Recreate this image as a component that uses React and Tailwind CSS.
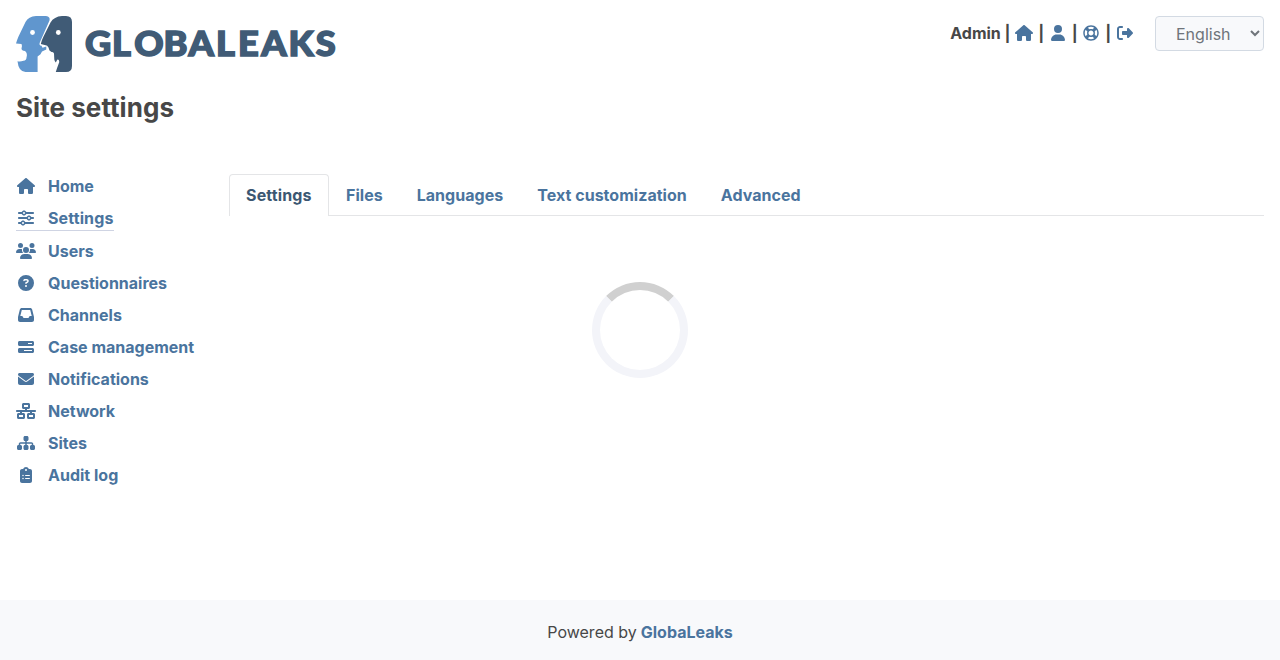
import React from 'react';
import {
  FaHouse, FaSliders, FaUsers, FaCircleQuestion, FaInbox, FaBarsProgress, FaEnvelope,
  FaNetworkWired, FaSitemap, FaClipboardList, FaUser, FaRightFromBracket,
} from 'react-icons/fa6';
import { FaRegLifeRing } from 'react-icons/fa';

const menu = [
  ['Home', FaHouse, 'w-[18px]'],
  ['Settings', FaSliders, 'w-4'],
  ['Users', FaUsers, 'w-5'],
  ['Questionnaires', FaCircleQuestion, 'w-4'],
  ['Channels', FaInbox, 'w-4'],
  ['Case management', FaBarsProgress, 'w-4'],
  ['Notifications', FaEnvelope, 'w-4'],
  ['Network', FaNetworkWired, 'w-5'],
  ['Sites', FaSitemap, 'w-[18px]'],
  ['Audit log', FaClipboardList, 'w-3'],
];

const actions = [
  [FaHouse, 'w-[18px]'],
  [FaUser, 'w-3.5'],
  [FaRegLifeRing, 'w-4'],
  [FaRightFromBracket, 'w-4'],
];

const tabs = ['Files', 'Languages', 'Text customization', 'Advanced'];

function Icon({ as: Glyph, width }) {
  return (
    <span className="inline-flex w-5 shrink-0 justify-center text-[#4a749e]">
      <Glyph className={`h-4 ${width}`} />
    </span>
  );
}

function Logo() {
  return (
    <svg className="block" width="324" height="56" viewBox="0 0 324 56" role="img" aria-label="GlobaLeaks">
      <path
        fill="#6096ce"
        d="M20 0H30Q34.500 0.500 33.500 4.500L24 26Q22.500 29.500 25.500 29.800L26.500 31.700L30.300 30.500V33.500L26 35.500L24.500 38.200L21.600 40.500V56H9.500Q2.500 55.500 1.500 45.200Q4 46 7.500 44.800Q10.500 44.500 10.500 41.500Q11.800 37 9 35Q5.500 34.500 5.500 32.500Q6.500 30 5.500 28L0 27.500Q1 24 2.500 20.500L9.500 6Q12.500 0.500 20 0Z"
      />
      <path
        fill="#405b76"
        d="M46 0H50Q56 0 56 6V50Q56 56 50 56H39.800Q41 52 43.300 46Q43 43 41.200 43.700L39.800 46.500Q38.500 45 38.300 43.500L38 37.500Q37.500 35.500 35.500 36L33.500 34.500L32.500 31.500Q31 29 29.500 29.300L24.800 28Q25.500 24.500 27.500 20.500L34.500 6.500Q38 0.500 46 0Z"
      />
      <circle cx="16.500" cy="16.500" r="2.400" fill="#fff" />
      <circle cx="42.300" cy="16.500" r="2.400" fill="#fff" />
      <text
        className="font-['Lato'] font-black"
        transform="scale(1.08 1)"
        fontSize="33.5"
        fill="#405b76"
        stroke="#405b76"
        strokeWidth="1.5"
        x="64 89 109.400 136.500 159.800 185.300 205.500 227.200 252.300 277.500"
        y="39.800"
      >
        GLOBALEAKS
      </text>
    </svg>
  );
}

export default function App() {
  return (
    <div className="flex h-[660px] flex-col bg-white font-['Inter',sans-serif] text-base text-[#474747]">
      <header className="flex h-[88px] shrink-0 items-start justify-between px-4 pt-4">
        <Logo />
        <div className="flex items-start">
          <div className="mt-[5px] flex h-6 items-center gap-[3.8px] font-bold">
            <span>Admin</span>
            {actions.map(([glyph, width], i) => (
              <React.Fragment key={i}>
                <span>|</span>
                <Icon as={glyph} width={width} />
              </React.Fragment>
            ))}
          </div>
          <select className="ml-5 h-[35px] w-[109px] rounded border border-[#d3dae3] bg-[#f8f9fb] pl-4 text-[#6f747a]">
            <option>English</option>
          </select>
        </div>
      </header>

      <h1 className="h-[82px] shrink-0 px-4 pt-1 text-[26px] leading-8 font-bold tracking-[0.05px]">Site settings</h1>

      <div className="flex flex-1">
        <nav className="flex w-[229px] shrink-0 flex-col items-start pl-4 font-bold text-[#4a749e]">
          {menu.map(([label, glyph, width]) => (
            <a key={label} className="block py-1">
              <span className={`flex items-center gap-3 leading-6 ${label === 'Settings' ? 'border-b border-[#cfd4e3] tracking-[0.12px]' : ''}`}>
                <Icon as={glyph} width={width} />
                {label}
              </span>
            </a>
          ))}
        </nav>
        <main className="flex flex-1 flex-col pt-1 pr-4">
          <div className="flex h-[42px] border-b border-[#e4e5e7] font-bold text-[#4a749e]">
            <a className="-mb-px w-[100px] rounded-t border border-b-0 border-[#e4e5e7] bg-white px-4 pt-2 leading-6 tracking-[0.15px] text-[#3b5772]">
              Settings
            </a>
            {tabs.map((tab) => (
              <a key={tab} className="border border-transparent px-4 pt-2 leading-6 tracking-[0.03px]">{tab}</a>
            ))}
          </div>
          <div className="mt-[66px] ml-[363px] size-24 rounded-full border-8 border-[#f3f4f9] border-t-[#d0d0d0]" />
        </main>
      </div>

      <footer className="flex h-[60px] shrink-0 items-center justify-center gap-1 bg-[#f8f9fb] pt-1">
        <span>Powered by</span>
        <a className="font-bold text-[#4a749e]">GlobaLeaks</a>
      </footer>
    </div>
  );
}
